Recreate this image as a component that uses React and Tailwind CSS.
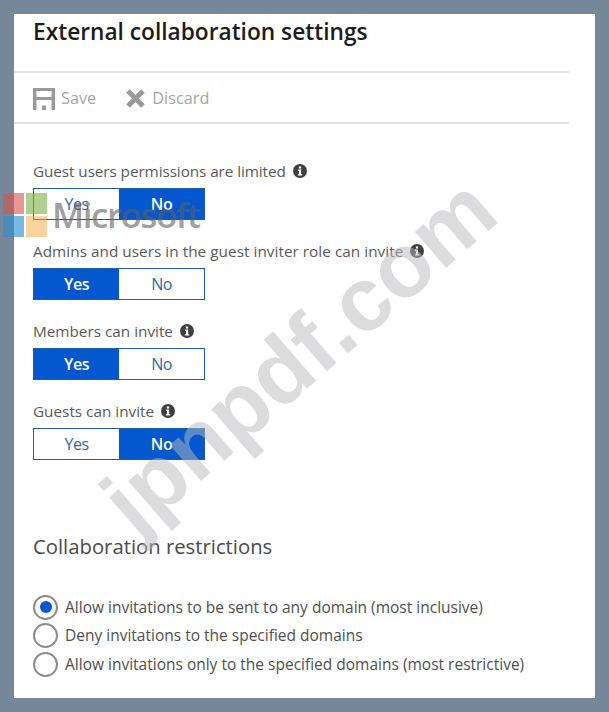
function Info({ className = "" }) {
  return (
    <svg viewBox="0 0 16 16" className={`h-[14px] w-[14px] shrink-0 ${className}`}>
      <circle cx="8" cy="8" r="8" fill="#3f3f3f" />
      <rect x="6.7" y="2.800" width="2.600" height="2.400" fill="#fff" />
      <path d="M5.600 6.400h3.700v5.200h1.200v1.600H5.600v-1.600h1.200V8H5.600z" fill="#fff" />
    </svg>
  );
}

function Toggle({ value, className = "" }) {
  const on = "bg-[#0358d0] text-white font-semibold";
  const off = "bg-white text-[#2f6aa8]";
  return (
    <div className={`flex h-[32px] w-[172px] border border-[#1c5ea8] text-[16px] tracking-[-0.5px] ${className}`}>
      <div className={`flex flex-1 items-center justify-center ${value === "Yes" ? on : off}`}>Yes</div>
      <div className={`flex flex-1 items-center justify-center ${value === "No" ? on : off}`}>No</div>
    </div>
  );
}

function Field({ label, value, className = "" }) {
  return (
    <div className={`flex flex-col ${className}`}>
      <div className="flex h-[20px] items-center gap-[7px] pt-[2px] text-[15.300px] text-[#5a5a5a]">
        <span>{label}</span>
        <Info />
      </div>
      <Toggle value={value} className="mt-[8px]" />
    </div>
  );
}

function Radio({ label, checked }) {
  return (
    <div className="flex h-[28.500px] items-center gap-[7px] text-[15.500px] text-[#4f4f4f]">
      <div className="flex h-[25px] w-[25px] items-center justify-center rounded-full border-2 border-[#8c8c8c] bg-white">
        {checked && <div className="h-[12px] w-[12px] rounded-full bg-[#0358d0]" />}
      </div>
      <span>{label}</span>
    </div>
  );
}

export default function App() {
  return (
    <div className="relative h-[712px] w-[609px] overflow-hidden bg-[#76879a] p-[14px] font-['Open_Sans',sans-serif]">
      <div className="h-[684px] w-[581px] bg-white">
        <div className="w-[555px]">
          <h1 className="h-[57px] pl-[19px] text-[22.700px] font-semibold leading-[36px] text-[#1c1c1c]">
            External collaboration settings
          </h1>
          <div className="flex h-[53px] items-center gap-[29px] border-y-2 border-[#e4e4e4] pl-[19px] pt-[2px] text-[16.300px] text-[#a6a6a6]">
            <div className="flex items-center gap-[6px]">
              <svg viewBox="0 0 22 22" className="h-[22px] w-[22px]">
                <path d="M0 0h22v22h-3.500V12h-15v10H0z M3.500 3v6h15V3z M9 17.500h4V22H9z" fill="#9a9a9a" fillRule="evenodd" />
              </svg>
              <span>Save</span>
            </div>
            <div className="flex items-center gap-[6px]">
              <svg viewBox="0 0 21 21" className="h-[21px] w-[21px]">
                <path d="M3 3l15 15M18 3L3 18" stroke="#9a9a9a" strokeWidth="5" fill="none" />
              </svg>
              <span>Discard</span>
            </div>
          </div>
        </div>

        <div className="flex flex-col pl-[19px] pt-[36px]">
          <Field label="Guest users permissions are limited" value="No" className="tracking-[-0.08px]" />
          <Field label="Admins and users in the guest inviter role can invite" value="Yes" className="mt-[20px] tracking-[0.04px]" />
          <Field label="Members can invite" value="Yes" className="mt-[20px]" />
          <Field label="Guests can invite" value="No" className="mt-[20px]" />

          <h2 className="mt-[71px] text-[20.300px] leading-[30px] text-[#4a4a4a]">Collaboration restrictions</h2>

          <div className="mt-[32px] flex flex-col">
            <Radio label="Allow invitations to be sent to any domain (most inclusive)" checked />
            <Radio label="Deny invitations to the specified domains" />
            <Radio label="Allow invitations only to the specified domains (most restrictive)" />
          </div>
        </div>
      </div>

      {/* watermark over the page */}
      <div className="pointer-events-none absolute left-[56px] top-[305px] origin-center -rotate-[41deg] whitespace-nowrap font-['Liberation_Sans',sans-serif] text-[90px] font-bold leading-[100px] text-[#b9b9be80]">
        jpnpdf.com
      </div>

      {/* microsoft logo watermark */}
      <div className="pointer-events-none absolute left-[3px] top-[193px] flex items-center gap-[5px]">
        <div className="grid grid-cols-[21px_21px] grid-rows-[21px_21px] gap-[2px]">
          <div className="bg-[#d9534899]" />
          <div className="bg-[#7cb34299]" />
          <div className="bg-[#2f8fd0a0]" />
          <div className="bg-[#f7a93b80]" />
        </div>
        <span className="text-[35px] font-semibold leading-[44px] tracking-[-1.500px] text-[#60606099]">Microsoft</span>
      </div>
    </div>
  );
}
